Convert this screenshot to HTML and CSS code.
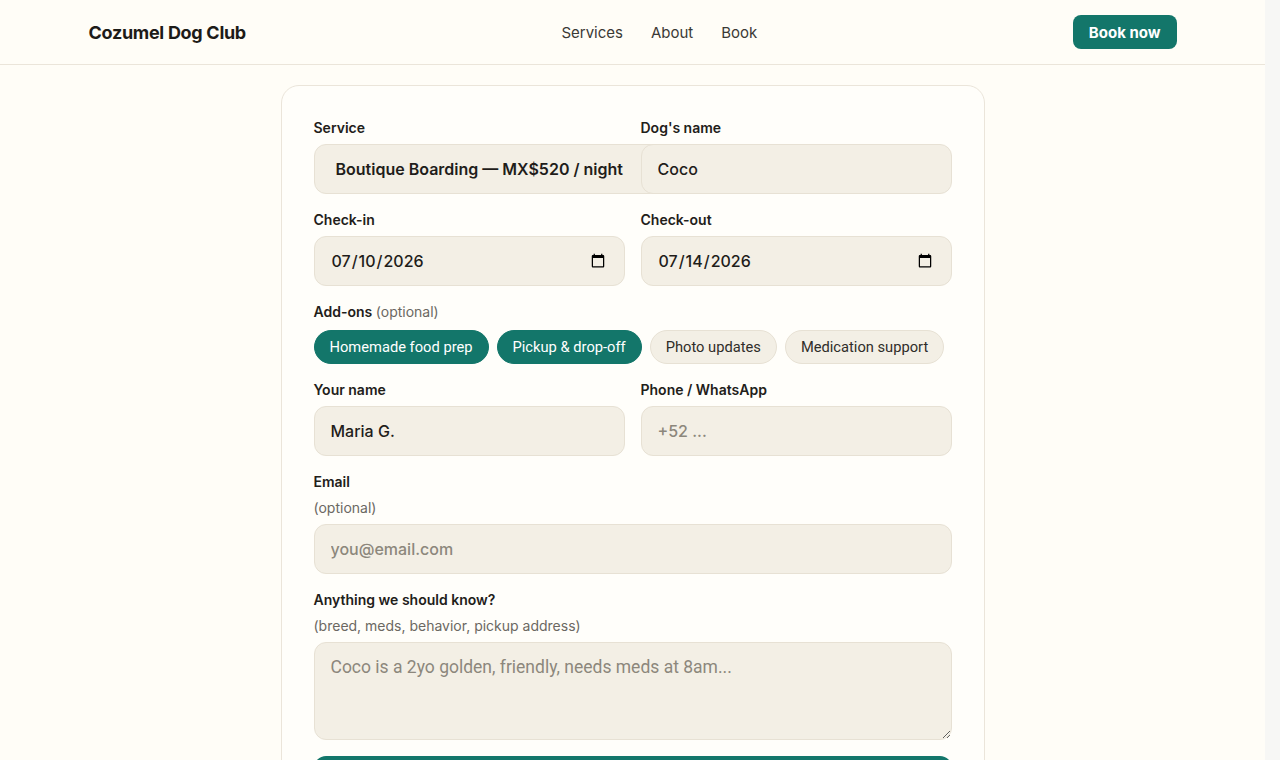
FILE: index.html
```html
<!DOCTYPE html>
<html lang="en">
<head>
  <meta charset="UTF-8" />
  <title>Cozumel Dog Club — Book a stay</title>
  <link rel="stylesheet" href="styles.css">
</head>
<body>
  <header class="site-header">
    <div class="header-inner">
      <a class="logo" href="#">Cozumel Dog Club</a>
      <nav class="nav">
        <a href="#">Services</a>
        <a href="#">About</a>
        <a href="#">Book</a>
      </nav>
      <a class="btn-book" href="#">Book now</a>
    </div>
  </header>

  <main class="main">
    <form class="card booking">
      <div class="grid">
        <div class="field">
          <label for="service">Service</label>
          <select id="service" class="control select">
            <option>Boutique Boarding — MX$520 / night</option>
            <option>Daycare — MX$280 / day</option>
          </select>
        </div>
        <div class="field">
          <label for="dog">Dog's name</label>
          <input id="dog" class="control" type="text" value="Coco">
        </div>

        <div class="field">
          <label for="checkin">Check-in</label>
          <input id="checkin" class="control" type="date" value="2026-07-10">
        </div>
        <div class="field">
          <label for="checkout">Check-out</label>
          <input id="checkout" class="control" type="date" value="2026-07-14">
        </div>

        <div class="field full">
          <label>Add-ons <span class="hint-inline">(optional)</span></label>
          <div class="chips">
            <button type="button" class="chip on">Homemade food prep</button>
            <button type="button" class="chip on">Pickup &amp; drop-off</button>
            <button type="button" class="chip">Photo updates</button>
            <button type="button" class="chip">Medication support</button>
          </div>
        </div>

        <div class="field">
          <label for="name">Your name</label>
          <input id="name" class="control" type="text" value="Maria G.">
        </div>
        <div class="field">
          <label for="phone">Phone / WhatsApp</label>
          <input id="phone" class="control" type="tel" placeholder="+52 ...">
        </div>

        <div class="field full">
          <label for="email">Email <span class="hint">(optional)</span></label>
          <input id="email" class="control" type="email" placeholder="you@email.com">
        </div>

        <div class="field full">
          <label for="notes">Anything we should know? <span class="hint">(breed, meds, behavior, pickup address)</span></label>
          <textarea id="notes" class="control area" placeholder="Coco is a 2yo golden, friendly, needs meds at 8am..."></textarea>
        </div>
      </div>
      <button type="submit" class="btn-submit">Request booking</button>
    </form>
  </main>
</body>
</html>
```

FILE: styles.css
```css
* {box-sizing: border-box;}
html {background: #f7f7f5;}
body {margin: 0 15px 0 0; background: #fffdf7; color: #1f1d1a; font-family: Inter, "Liberation Sans", sans-serif;}
a {text-decoration: none; color: inherit;}

/* header */
.site-header {background: #fffdf7; border-bottom: 1px solid #ebe5da;}
.header-inner {max-width: 1120px; margin: 0 auto; padding: 0 16px; height: 64px; display: flex; align-items: center; justify-content: space-between;}
.logo {font-size: 18px; font-weight: 700; letter-spacing: -0.3px; color: #1d1b18;}
.nav {display: flex; gap: 28px; font-size: 15px; color: #3b3935;}
.btn-book {background: #13766a; color: #fff; font-weight: 700; font-size: 15px; padding: 8px 16px; border-radius: 8px; height: 34px; display: flex; align-items: center;}

/* card */
.main {padding: 20px 16px 40px;}
.card {width: 704px; margin: 0 auto; background: #fffefa; border: 1px solid #ebe5da; border-radius: 18px; padding: 32px;}
.grid {display: grid; grid-template-columns: repeat(2, minmax(0, 1fr)); column-gap: 16px; row-gap: 16px;}
.field {display: flex; flex-direction: column; gap: 6px; min-width: 0;}
.field.full {grid-column: 1 / -1;}
.field label {font-size: 14px; font-weight: 600; color: #222019; line-height: 20px;}
.hint-inline {font-weight: 400; color: #6b6862;}
.hint {display: block; font-weight: 400; color: #6b6862; margin-top: 6px;}

.control {height: 50px; width: 100%; background: #f3efe5; border: 1px solid #e7e1d4; border-radius: 12px; padding: 0 16px; font-family: Inter, "Liberation Sans", sans-serif; font-size: 16px; font-weight: 500; color: #1f1d1a; outline: none;}
.control::placeholder {color: #8c877c;}
.select {appearance: none; width: auto; align-self: flex-start; padding: 0 40px 0 21px; font-weight: 600;}
.area {height: 98px; padding: 14px 16px; resize: vertical; font-family: Roboto, sans-serif; font-weight: 400; font-size: 17.5px;}

.chips {display: flex; flex-wrap: wrap; gap: 8px; margin-top: 2px;}
.chip {height: 34px; padding: 0 15px; border-radius: 999px; border: 1px solid #e7e1d4; background: #f3efe5; color: #2f2d29; font-family: Roboto, sans-serif; font-size: 14.7px;}
.chip.on {background: #13766a; border-color: #13766a; color: #fff;}

.btn-submit {margin-top: 16px; width: 100%; height: 50px; border: 0; border-radius: 12px; background: #13766a; color: #fff; font-family: Inter, sans-serif; font-size: 16px; font-weight: 700;}
```
